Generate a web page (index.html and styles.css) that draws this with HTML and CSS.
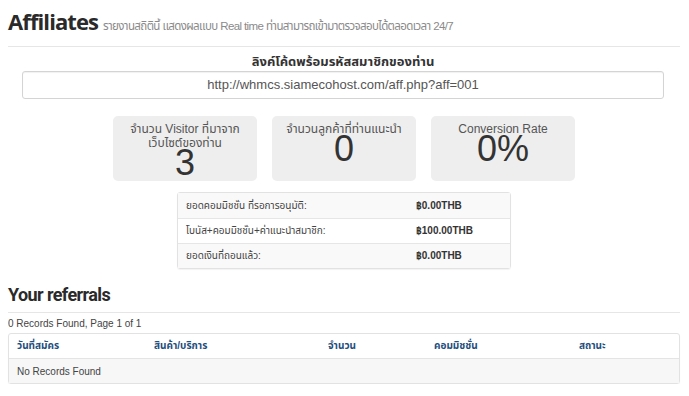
FILE: index.html
```html
<!doctype html>
<html>
<head>
<meta charset="utf-8">
<title>Affiliates</title>
<link rel="stylesheet" href="styles.css">
</head>
<body>
<div class="page">
	<div class="page-header">
		<h1>Affiliates <small>รายงานสถิตินี้ แสดงผลแบบ Real time ท่านสามารถเข้ามาตรวจสอบได้ตลอดเวลา 24/7</small></h1>
	</div>

	<div class="reflink">
		<h4>ลิงค์โค้ดพร้อมรหัสสมาชิกของท่าน</h4>
		<div class="reflink-box">http://whmcs.siamecohost.com/aff.php?aff=001</div>
	</div>

	<div class="stats">
		<div class="stat">
			<div class="stat-label">จำนวน Visitor ที่มาจาก<br>เว็บไซต์ของท่าน</div>
			<div class="stat-num">3</div>
		</div>
		<div class="stat">
			<div class="stat-label">จำนวนลูกค้าที่ท่านแนะนำ</div>
			<div class="stat-num">0</div>
		</div>
		<div class="stat">
			<div class="stat-label">Conversion Rate</div>
			<div class="stat-num">0%</div>
		</div>
	</div>

	<table class="commission">
		<tr class="odd"><td class="lbl">ยอดคอมมิชชั่น ที่รอการอนุมัติ:</td><td class="val">฿0.00THB</td></tr>
		<tr><td class="lbl">โบนัส+คอมมิชชั่น+ค่าแนะนำสมาชิก:</td><td class="val">฿100.00THB</td></tr>
		<tr class="odd"><td class="lbl">ยอดเงินที่ถอนแล้ว:</td><td class="val">฿0.00THB</td></tr>
	</table>

	<h2 class="section">Your referrals</h2>

	<p class="records">0 Records Found, Page 1 of 1</p>

	<table class="referrals">
		<thead>
			<tr>
				<th class="c1">วันที่สมัคร</th>
				<th class="c2">สินค้า/บริการ</th>
				<th class="c3">จำนวน</th>
				<th class="c4">คอมมิชชั่น</th>
				<th class="c5">สถานะ</th>
			</tr>
		</thead>
		<tbody>
			<tr><td colspan="5">No Records Found</td></tr>
		</tbody>
	</table>
</div>
</body>
</html>
```

FILE: styles.css
```css
*{margin:0;padding:0;box-sizing:border-box;}
body{
	font-family:"Liberation Sans","Noto Sans Thai","Noto Sans",Arial,sans-serif;
	color:#333;
	background:#fff;
}
.page{padding:0 9px 0 8px;}

.page-header{
	padding-top:9px;
	padding-bottom:8px;
	border-bottom:1px solid #e6e6e6;
}
.page-header h1{
	font-family:"Open Sans","Noto Sans Thai",sans-serif;
	font-weight:700;
	font-size:22px;
	line-height:24px;
	letter-spacing:-0.9px;
	color:#2a2a2a;
}
.page-header h1 small{
	font-family:"Liberation Sans","Noto Sans Thai",sans-serif;
	font-weight:normal;
	font-size:11.5px;
	letter-spacing:-0.6px;
	color:#8a8a8a;
}

.reflink{padding:0 16px 0 14px;text-align:center;}
.reflink h4{
	font-size:13px;
	font-weight:bold;
	line-height:18px;
	margin-top:6px;
	margin-bottom:0;
	color:#333;
}
.reflink-box{
	height:28px;
	border:1px solid #d4d4d4;
	border-radius:3px;
	box-shadow:inset 0 1px 1px rgba(0,0,0,.06);
	font-size:13px;
	line-height:26px;
	color:#555;
}

.stats{
	display:flex;
	justify-content:center;
	gap:15px;
	margin-top:17px;
}
.stat{
	width:144px;
	height:65px;
	background:#eee;
	border-radius:5px;
	text-align:center;
	padding-top:6px;
	color:#555;
}
.stat-label{font-size:12px;line-height:14px;}
.stat-num{font-size:36px;line-height:25px;color:#333;}

.commission{
	width:334px;
	margin:11px auto 0;
	border-collapse:separate;
	border-spacing:0;
	border:1px solid #e2e2e2;
	border-radius:3px;
	box-shadow:0 1px 1px rgba(0,0,0,.05);
	font-size:10px;
}
.commission td{
	height:25px;
	padding:0 8px;
	border-top:1px solid #e6e6e6;
	color:#444;
}
.commission tr:first-child td{border-top:0;}
.commission tr.odd td{background:#f9f9f9;}
.commission td.lbl{width:230px;}
.commission td.val{font-weight:bold;color:#333;}

.section{
	font-family:"Roboto","Open Sans",sans-serif;
	font-weight:700;
	font-size:18px;
	letter-spacing:-0.6px;
	line-height:22px;
	margin-top:15px;
	padding-bottom:6px;
	border-bottom:1px solid #e6e6e6;
	color:#2a2a2a;
}

.records{font-size:10px;line-height:14px;margin-top:4px;color:#444;}

.referrals{
	width:100%;
	margin-top:2px;
	border-collapse:separate;
	border-spacing:0;
	border:1px solid #e2e2e2;
	border-radius:3px;
	box-shadow:0 1px 1px rgba(0,0,0,.05);
	font-size:10px;
}
.referrals th{
	height:25px;
	padding:0 8px;
	text-align:left;
	font-weight:bold;
	color:#1f4f7e;
	border-bottom:1px solid #e4e4e4;
}
.referrals th.c1{width:137px;}
.referrals th.c2{width:174px;}
.referrals th.c3{width:106px;}
.referrals th.c4{width:145px;}
.referrals td{
	height:24px;
	padding:0 8px;
	background:#f7f7f7;
	color:#444;
}
```
